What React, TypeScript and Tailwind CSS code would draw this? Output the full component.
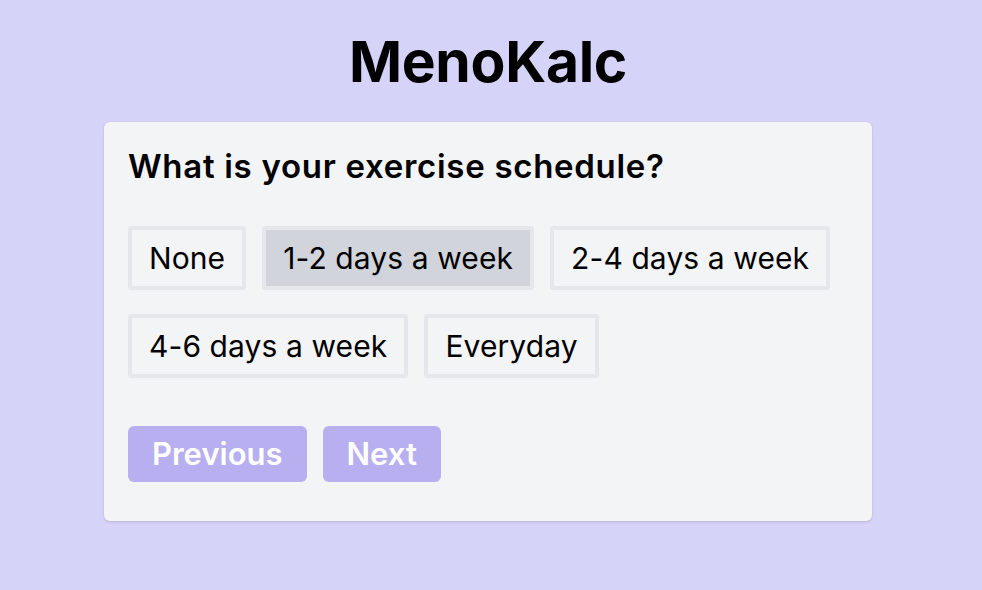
import React from "react";

const options = ["None", "1-2 days a week", "2-4 days a week", "4-6 days a week", "Everyday"];

export default function App() {
  const selected = "1-2 days a week";
  return (
    <div
      className="min-h-[590px] w-full bg-[#d6d3f8] flex flex-col items-center"
      style={{ fontFamily: "Inter, 'Noto Sans', sans-serif" }}
    >
      <div className="w-[768px] ml-[-6px] flex flex-col">
        <h1 className="text-center text-[57px] leading-[68px] font-bold text-black mt-[28px] mb-[26px] tracking-[-0.3px]">
          MenoKalc
        </h1>
        <div className="bg-[#f3f4f6] rounded-md shadow-[0_1px_3px_rgba(0,0,0,0.15)] px-6 pt-[22px] pb-[39px]">
          <h2 className="text-[33px] leading-[44px] font-semibold text-black tracking-[0.7px]">
            What is your exercise schedule?
          </h2>
          <div className="flex flex-wrap gap-x-4 gap-y-6 mt-[38px] w-[720px]">
            {options.map((o) => (
              <button
                key={o}
                className={
                  "h-[64px] px-[17px] border-4 border-[#e5e7eb] rounded-[3px] text-[30px] tracking-[0.1px] text-black " +
                  (o === selected ? "bg-[#d1d5db]" : "bg-[#f3f4f6]")
                }
              >
                {o}
              </button>
            ))}
          </div>
          <div className="flex gap-4 mt-[48px]">
            <button className="h-[56px] px-[24px] rounded-md bg-[#b7aff0] text-white text-[31px] font-semibold">
              Previous
            </button>
            <button className="h-[56px] px-[24px] rounded-md bg-[#b7aff0] text-white text-[31px] font-semibold">
              Next
            </button>
          </div>
        </div>
      </div>
    </div>
  );
}
